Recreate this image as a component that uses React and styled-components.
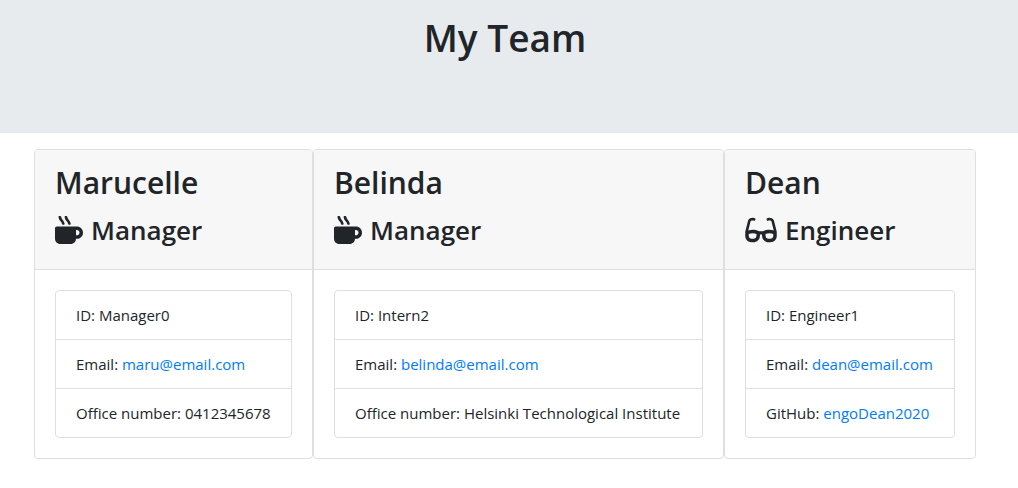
import React from "react";
import styled, { createGlobalStyle } from "styled-components";
import { FaMugHot, FaGlasses } from "react-icons/fa";

const GlobalStyle = createGlobalStyle`
  *, *::before, *::after { box-sizing: border-box; }
  body {
    margin: 0;
    background: #fff;
    color: #212529;
    font-family: "Segoe UI", "Open Sans", "Noto Sans", sans-serif;
    font-size: 15px;
    line-height: 24px;
  }
`;

const Hero = styled.header`
  min-height: 133px;
  padding: 16px 8px 16px 0;
  background: #e7ebee;
  text-align: center;
`;

const Title = styled.h1`
  margin: 0;
  font-size: 37px;
  font-weight: 600;
  line-height: 44px;
`;

const Team = styled.main`
  display: grid;
  grid-template-columns: 279fr 411fr 252fr;
  padding: 16px 42px 28px 34px;
`;

const Card = styled.article`
  min-width: 0;
  border: 1px solid #dfdfdf;
  border-radius: 4px;
  overflow: hidden;
`;

const CardHeader = styled.div`
  padding: 12px 20px 17px;
  background: #f7f7f7;
  border-bottom: 1px solid #dfdfdf;
`;

const Name = styled.h2`
  margin: 0 0 4px;
  font-size: 30px;
  font-weight: 600;
  line-height: 42px;
`;

const Role = styled.h3`
  display: flex;
  align-items: center;
  gap: 8px;
  margin: 0;
  font-size: 26px;
  font-weight: 600;
  line-height: 44px;
`;

const RoleIcon = styled.svg`
  flex: none;
  width: ${({ $width }) => $width}px;
  height: 28px;
`;

const Details = styled.ul`
  margin: 20px;
  padding: 0;
  list-style: none;
  border: 1px solid #dfdfdf;
  border-radius: 4px;
`;

const Detail = styled.li`
  padding: 12px 20px;
  white-space: nowrap;

  & + & {
    border-top: 1px solid #dfdfdf;
  }
`;

const Link = styled.a`
  color: #007bff;
  text-decoration: none;

  &:hover {
    text-decoration: underline;
  }
`;

const roleIcons = {
  Manager: { icon: FaMugHot, width: 28 },
  Engineer: { icon: FaGlasses, width: 32 },
};

const members = [
  {
    name: "Marucelle", role: "Manager", id: "Manager0",
    email: "maru@email.com", label: "Office number", value: "0412345678",
  },
  {
    name: "Belinda", role: "Manager", id: "Intern2",
    email: "belinda@email.com", label: "Office number", value: "Helsinki Technological Institute",
  },
  {
    name: "Dean", role: "Engineer", id: "Engineer1",
    email: "dean@email.com", label: "GitHub", value: "engoDean2020",
    href: "https://github.com/engoDean2020",
  },
];

function MemberCard({ name, role, id, email, label, value, href }) {
  const { icon, width } = roleIcons[role];
  return (
    <Card>
      <CardHeader>
        <Name>{name}</Name>
        <Role><RoleIcon as={icon} $width={width} aria-hidden="true" />{role}</Role>
      </CardHeader>
      <Details>
        <Detail>ID: {id}</Detail>
        <Detail>Email: <Link href={`mailto:${email}`}>{email}</Link></Detail>
        <Detail>{label}: {href ? <Link href={href}>{value}</Link> : value}</Detail>
      </Details>
    </Card>
  );
}

export default function App() {
  return (
    <>
      <GlobalStyle />
      <Hero><Title>My Team</Title></Hero>
      <Team>
        {members.map((m) => <MemberCard key={m.name} {...m} />)}
      </Team>
    </>
  );
}
